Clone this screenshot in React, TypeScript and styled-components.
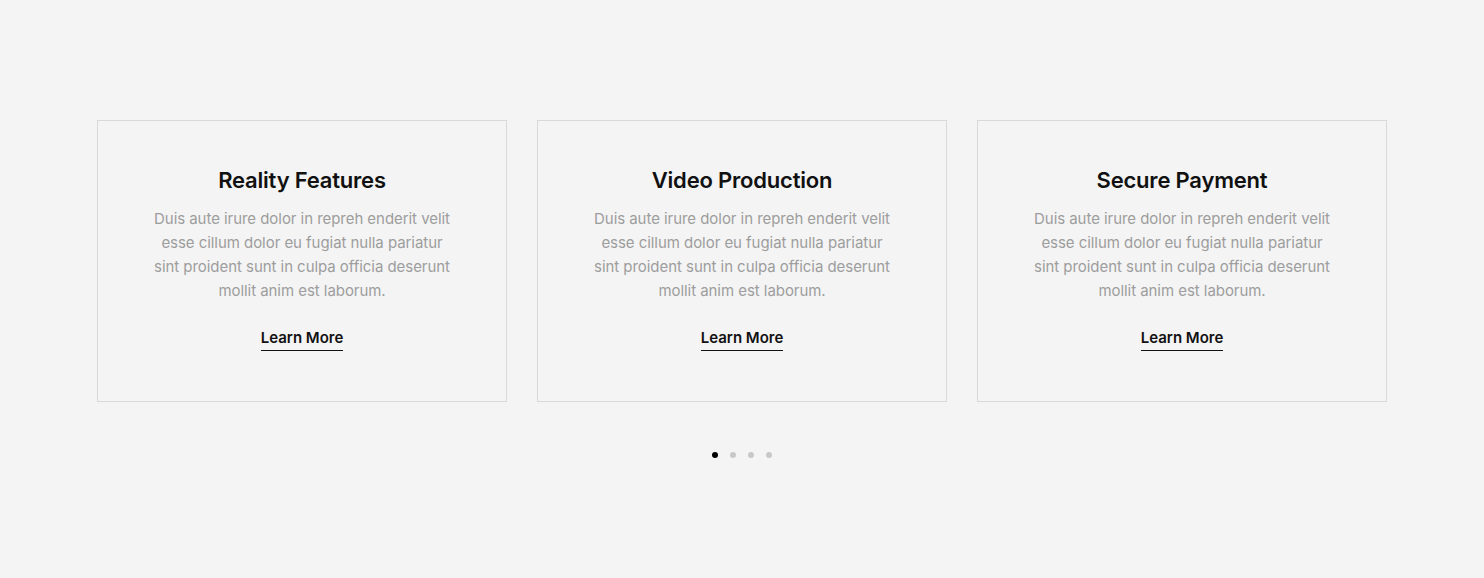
import React from "react";
import styled, { createGlobalStyle } from "styled-components";

const Global = createGlobalStyle`
  html, body { margin: 0; padding: 0; background: #f4f4f4; }
  body { font-family: Inter, "Noto Sans", sans-serif; }
`;

const Page = styled.div`
  min-height: 578px;
  padding-top: 120px;
  box-sizing: border-box;
  display: flex;
  flex-direction: column;
  align-items: center;
`;

const Row = styled.div`
  display: grid;
  grid-template-columns: repeat(3, 410px);
  gap: 30px;
`;

const Card = styled.div`
  box-sizing: border-box;
  height: 282px;
  border: 1px solid #d9d9d9;
  padding: 44px 52px 0;
  display: flex;
  flex-direction: column;
  align-items: center;
  text-align: center;
`;

const Title = styled.h3`
  margin: 0;
  font-size: 22px;
  line-height: 30px;
  font-weight: 600;
  color: #111;
  letter-spacing: -0.2px;
`;

const Body = styled.p`
  margin: 12px 0 0;
  font-size: 15px;
  line-height: 24px;
  color: #9d9d9d;
  letter-spacing: -0.05px;
`;

const Link = styled.a`
  margin-top: 25px;
  font-size: 15px;
  line-height: 20px;
  font-weight: 600;
  color: #111;
  text-decoration: none;
  padding-bottom: 2px;
  border-bottom: 1px solid #111;
  cursor: pointer;
`;

const Dots = styled.div`
  display: flex;
  gap: 12px;
  margin-top: 50px;
`;

const Dot = styled.span<{ $active?: boolean }>`
  width: 6px;
  height: 6px;
  border-radius: 50%;
  background: ${(p) => (p.$active ? "#000" : "#c8c8c8")};
`;

const cards = ["Reality Features", "Video Production", "Secure Payment"];
const text =
  "Duis aute irure dolor in repreh enderit velit esse cillum dolor eu fugiat nulla pariatur sint proident sunt in culpa officia deserunt mollit anim est laborum.";

export default function App() {
  return (
    <>
      <Global />
      <Page>
        <Row>
          {cards.map((t) => (
            <Card key={t}>
              <Title>{t}</Title>
              <Body>{text}</Body>
              <Link>Learn More</Link>
            </Card>
          ))}
        </Row>
        <Dots>
          {[0, 1, 2, 3].map((i) => (
            <Dot key={i} $active={i === 0} />
          ))}
        </Dots>
      </Page>
    </>
  );
}
